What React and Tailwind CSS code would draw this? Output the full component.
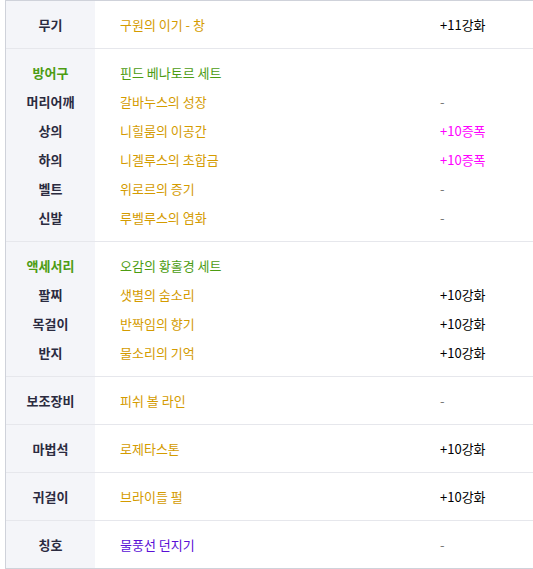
import React from 'react';

const GOLD = 'text-[#d49b00]';
const GREEN = 'text-[#4c9c12]';

const sections = [
  { rows: [{ label: '무기', item: '구원의 이기 - 창', color: GOLD, value: '+11강화' }] },
  {
    rows: [
      { label: '방어구', labelColor: GREEN, item: '핀드 베나토르 세트', color: GREEN },
      { label: '머리어깨', item: '갈바누스의 성장', color: GOLD, value: '-' },
      { label: '상의', item: '니힐룸의 이공간', color: GOLD, value: '+10증폭', valueColor: 'text-[#ff00ff]' },
      { label: '하의', item: '니겔루스의 초합금', color: GOLD, value: '+10증폭', valueColor: 'text-[#ff00ff]' },
      { label: '벨트', item: '위로르의 증기', color: GOLD, value: '-' },
      { label: '신발', item: '루벨루스의 염화', color: GOLD, value: '-' },
    ],
  },
  {
    rows: [
      { label: '액세서리', labelColor: GREEN, item: '오감의 황홀경 세트', color: GREEN },
      { label: '팔찌', item: '샛별의 숨소리', color: GOLD, value: '+10강화' },
      { label: '목걸이', item: '반짝임의 향기', color: GOLD, value: '+10강화' },
      { label: '반지', item: '물소리의 기억', color: GOLD, value: '+10강화' },
    ],
  },
  { rows: [{ label: '보조장비', item: '피쉬 볼 라인', color: GOLD, value: '-' }] },
  { rows: [{ label: '마법석', item: '로제타스톤', color: GOLD, value: '+10강화' }] },
  { rows: [{ label: '귀걸이', item: '브라이들 펄', color: GOLD, value: '+10강화' }] },
  { rows: [{ label: '칭호', item: '물풍선 던지기', color: 'text-[#5a0fd6]', value: '-' }] },
];

function Row({ row }) {
  const isDash = row.value === '-';
  return (
    <div className="flex h-[29px] items-center">
      <div className={`w-[89px] shrink-0 text-center font-bold ${row.labelColor || 'text-[#2b2b40]'}`}>{row.label}</div>
      <div className={`w-[345px] shrink-0 pl-[25px] ${row.color}`}>{row.item}</div>
      <div className={isDash ? 'text-[#777]' : row.valueColor || 'text-black'}>{row.value}</div>
    </div>
  );
}

export default function App() {
  return (
    <div className="bg-white w-[533px] h-[569px] pl-[5px]" style={{ fontFamily: '"Noto Sans CJK KR", "Noto Sans", sans-serif' }}>
      <div className="border-t border-l border-b border-[#cfd2da] text-[13px] relative">
        <div className="absolute left-0 top-0 bottom-0 w-[89px] bg-[#f4f5f9]" />
        {sections.map((s, i) => (
          <div key={i} className={`relative py-[9px] ${i > 0 ? 'border-t border-[#e6e7ec]' : ''}`}>
            {s.rows.map((r, j) => <Row key={j} row={r} />)}
          </div>
        ))}
      </div>
    </div>
  );
}
